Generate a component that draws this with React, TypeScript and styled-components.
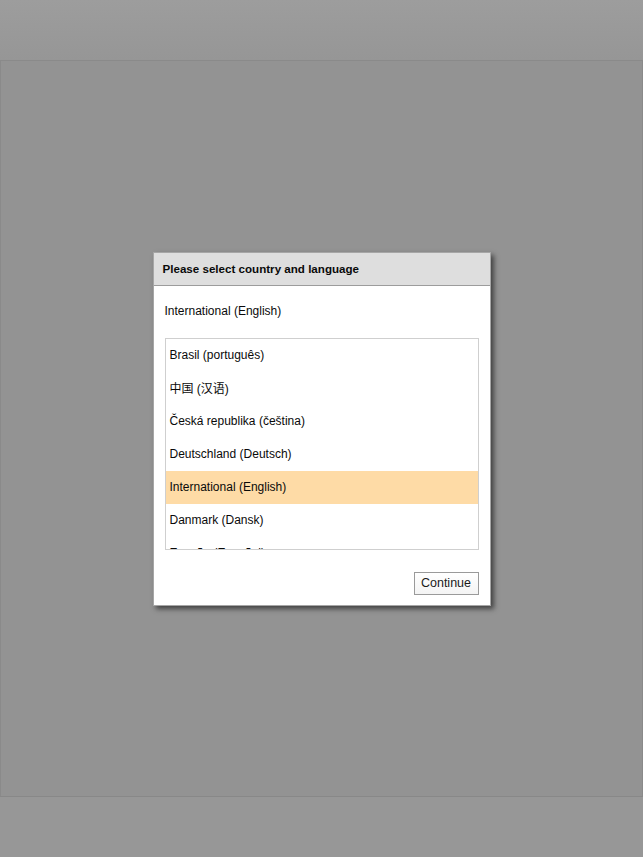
import React from "react";
import styled, { createGlobalStyle } from "styled-components";

const Global = createGlobalStyle`
  html, body { margin: 0; padding: 0; }
  body {
    background: #949494;
    font-family: "Liberation Sans", Arial, "Noto Sans CJK SC", sans-serif;
    color: #111;
  }
`;

const Page = styled.div`
  width: 643px;
  height: 857px;
  display: flex;
  flex-direction: column;
  overflow: hidden;
`;

const TopBar = styled.div`
  height: 60px;
  flex: none;
  background: linear-gradient(#9d9d9d, #969696);
  border-bottom: 1px solid #8a8a8a;
`;

const BottomBar = styled.div`
  height: 60px;
  flex: none;
  background: #979797;
  border-top: 1px solid #888888;
`;

const Main = styled.main`
  flex: 1;
  background: #939393;
  border-left: 1px solid #8a8a8a;
  border-right: 1px solid #8a8a8a;
  display: flex;
  align-items: center;
  justify-content: center;
`;

const Dialog = styled.div`
  width: 336px;
  background: #ffffff;
  border: 1px solid #a6a6a6;
  box-shadow: 3px 3px 5px rgba(0, 0, 0, 0.55);
  display: flex;
  flex-direction: column;
`;

const Header = styled.div`
  height: 32px;
  background: #dedede;
  border-bottom: 1px solid #9c9c9c;
  display: flex;
  align-items: center;
  padding: 0 9px;
  font-size: 11.6px;
  font-weight: bold;
  color: #0a0a0a;
`;

const Body = styled.div`
  padding: 0 11px;
  display: flex;
  flex-direction: column;
`;

const Selected = styled.div`
  padding-top: 17px;
  line-height: 16px;
  margin-bottom: 19px;
  font-size: 12px;
  color: #0a0a0a;
`;

const List = styled.ul`
  list-style: none;
  margin: 0;
  padding: 0;
  height: 210px;
  border: 1px solid #cfcfcf;
  overflow: hidden;
`;

const Item = styled.li<{ $active?: boolean }>`
  height: 33px;
  display: flex;
  align-items: center;
  padding-left: 4px;
  padding-bottom: 1px;
  box-sizing: border-box;
  font-size: 12px;
  color: #0a0a0a;
  background: ${(p) => (p.$active ? "#fedba6" : "#ffffff")};
  font-family: "Liberation Sans", Arial, "Noto Sans CJK SC", sans-serif;
`;

const Footer = styled.div`
  display: flex;
  justify-content: flex-end;
  padding: 22px 11px 10px;
`;

const Button = styled.button`
  width: 65px;
  height: 23px;
  padding: 0;
  background: linear-gradient(#ffffff, #f4f4f4);
  border: 1px solid #9a9a9a;
  border-radius: 0;
  font-family: "Liberation Sans", Arial, sans-serif;
  font-size: 12.5px;
  color: #1a1a1a;
`;

const countries = [
  "Brasil (português)",
  "中国 (汉语)",
  "Česká republika (čeština)",
  "Deutschland (Deutsch)",
  "International (English)",
  "Danmark (Dansk)",
  "España (Español)",
];

export default function App() {
  return (
    <>
      <Global />
      <Page>
        <TopBar />
        <Main>
          <Dialog>
            <Header>Please select country and language</Header>
            <Body>
              <Selected>International (English)</Selected>
              <List>
                {countries.map((c) => (
                  <Item key={c} $active={c === "International (English)"}>
                    {c}
                  </Item>
                ))}
              </List>
            </Body>
            <Footer>
              <Button>Continue</Button>
            </Footer>
          </Dialog>
        </Main>
        <BottomBar />
      </Page>
    </>
  );
}
